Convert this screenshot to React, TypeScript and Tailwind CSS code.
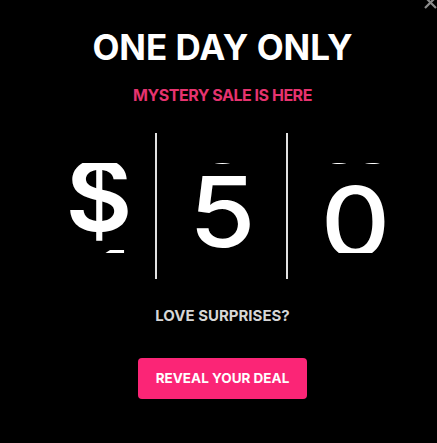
import React from "react";

const reelFont = { fontFamily: "Inter, 'Noto Sans', sans-serif" };

function Column({ children, border }: { children: React.ReactNode; border?: boolean }) {
  return (
    <div className={`h-[146px] w-[131px] ${border ? "border-r-2 border-[#e2e2e2]" : ""}`}>
      <div className="mt-[30px] h-[90px] overflow-hidden">
        <div className="flex flex-col items-center text-[98px] leading-[98px] font-medium text-white">
          {children}
        </div>
      </div>
    </div>
  );
}

export default function App() {
  return (
    <div
      className="relative h-[443px] w-[437px] overflow-hidden bg-black pl-2"
      style={{ fontFamily: "Inter, 'Noto Sans', sans-serif" }}
    >
      <svg
        className="absolute left-[423px] top-[-5px]"
        width="15"
        height="15"
        viewBox="0 0 15 15"
      >
        <path d="M2 2 L13 13 M13 2 L2 13" stroke="#8c8c8c" strokeWidth="2.2" />
      </svg>
      <div className="flex flex-col items-center">
        <h1 className="mt-[30px] text-[35px] leading-[35px] font-bold text-white">ONE DAY ONLY</h1>
        <p className="mt-[22px] text-[16px] leading-[16px] font-bold tracking-[-0.03em] text-[#e6336f]">
          MYSTERY SALE IS HERE
        </p>
        <div className="mt-[30px] flex" style={reelFont}>
          <Column border>
            <span className="ml-[16px] mt-[-16px] block scale-x-105 font-semibold">$</span>
            <span className="ml-[40px] mt-[-8px] block scale-x-110">1</span>
          </Column>
          <Column border>
            <span className="ml-[2px] mt-[-84px] block scale-x-110">0</span>
            <span className="ml-[2px] mt-[-14px] block scale-x-110">5</span>
          </Column>
          <Column>
            <span className="ml-[4px] mt-[-84px] block scale-x-110">ω</span>
            <span className="ml-[4px] mt-[-4px] block scale-x-110">0</span>
          </Column>
        </div>
        <p className="mt-[29px] text-[15px] leading-[15px] font-bold text-[#d6d6d6]">LOVE SURPRISES?</p>
        <button className="mt-[35px] flex h-[41px] w-[169px] items-center justify-center rounded-[4px] bg-[#fb2576] text-[13.5px] font-bold text-white">
          REVEAL YOUR DEAL
        </button>
      </div>
    </div>
  );
}
